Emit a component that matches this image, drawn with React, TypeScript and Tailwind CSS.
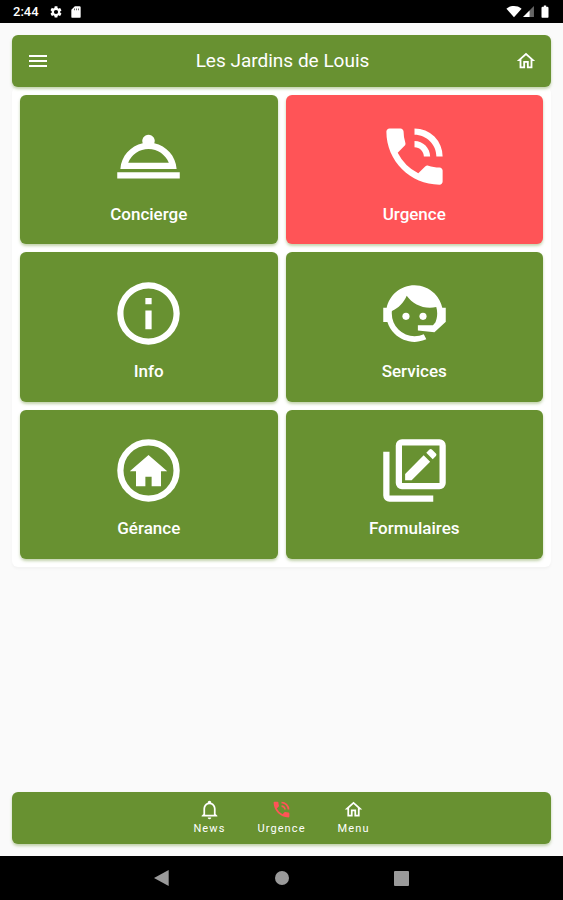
import type { ReactNode } from 'react';

type IconProps = { className?: string };

function Icon({ className, children }: { className?: string; children: ReactNode }) {
  return (
    <svg viewBox="0 0 24 24" fill="currentColor" aria-hidden="true" className={className}>
      {children}
    </svg>
  );
}

const MenuIcon = ({ className }: IconProps) => (
  <Icon className={className}>
    <path d="M3 6h18v2H3zM3 11h18v2H3zM3 16h18v2H3z" />
  </Icon>
);

const HomeIcon = ({ className }: IconProps) => (
  <Icon className={className}>
    <path d="M12 5.69L17 10.19V18H15V12H9V18H7V10.19L12 5.69M12 3L2 12H5V20H11V14H13V20H19V12H22L12 3Z" />
  </Icon>
);

const BellIcon = ({ className }: IconProps) => (
  <Icon className={className}>
    <path d="M10 21H14C14 22.1 13.1 23 12 23S10 22.1 10 21M21 19V20H3V19L5 17V11C5 7.9 7 5.2 10 4.3V4C10 2.9 10.9 2 12 2S14 2.9 14 4V4.3C17 5.2 19 7.9 19 11V17L21 19M17 11C17 8.2 14.8 6 12 6S7 8.2 7 11V18H17V11Z" />
  </Icon>
);

const PhoneIcon = ({ className }: IconProps) => (
  <Icon className={className}>
    <path d="M20 15.5c-1.25 0-2.45-.2-3.57-.57-.35-.11-.74-.03-1.02.24l-2.2 2.2a15.05 15.05 0 0 1-6.59-6.59l2.2-2.21c.28-.26.36-.65.25-1A11.36 11.36 0 0 1 8.5 4c0-.55-.45-1-1-1H4c-.55 0-1 .45-1 1 0 9.39 7.61 17 17 17 .55 0 1-.45 1-1v-3.5c0-.55-.45-1-1-1zM19 12h2a9 9 0 0 0-9-9v2c3.87 0 7 3.13 7 7zm-4 0h2c0-2.76-2.24-5-5-5v2c1.66 0 3 1.34 3 3z" />
  </Icon>
);

const BellServiceIcon = ({ className }: IconProps) => (
  <Icon className={className}>
    <path
      fillRule="evenodd"
      d="M2 17h20v2H2zM13.84 7.79A2.006 2.006 0 0 0 12 5a2.006 2.006 0 0 0-1.84 2.79C6.25 8.6 3.27 11.93 3 16h18c-.27-4.07-3.25-7.4-7.16-8.21zM12 9.58c2.95 0 5.47 1.83 6.5 4.41h-13A7.002 7.002 0 0 1 12 9.58z"
    />
  </Icon>
);

const InfoIcon = ({ className }: IconProps) => (
  <Icon className={className}>
    <path d="M11 9h2V7h-2m1 13c-4.41 0-8-3.59-8-8s3.59-8 8-8 8 3.59 8 8-3.59 8-8 8m0-18A10 10 0 0 0 2 12a10 10 0 0 0 10 10 10 10 0 0 0 10-10A10 10 0 0 0 12 2m-1 15h2v-6h-2v6z" />
  </Icon>
);

const AgentIcon = ({ className }: IconProps) => (
  <Icon className={className}>
    <path d="M18.72,14.76C19.07,13.91 19.26,13 19.26,12C19.26,11.28 19.15,10.59 18.96,9.95C18.31,10.1 17.63,10.18 16.92,10.18C13.86,10.18 11.15,8.67 9.5,6.34C8.61,8.5 6.91,10.26 4.77,11.22C4.73,11.47 4.73,11.74 4.73,12A7.27,7.27 0 0,0 12,19.27C13.05,19.27 14.06,19.04 14.97,18.63C15.54,19.72 15.8,20.26 15.78,20.26C14.14,20.81 12.87,21.08 12,21.08C9.58,21.08 7.27,20.13 5.57,18.42C4.53,17.38 3.76,16.11 3.33,14.73H2V10.18H3.09C3.93,6.04 7.6,2.92 12,2.92C14.4,2.92 16.71,3.87 18.42,5.58C19.69,6.84 20.54,8.45 20.89,10.18H22V14.73H21.94L18.38,18L13.08,17.4V15.73H17.91L18.72,14.76Z" />
    <circle cx="9.27" cy="12.91" r="1.14" />
    <circle cx="14.72" cy="12.91" r="1.14" />
  </Icon>
);

const HomeCircleIcon = ({ className }: IconProps) => (
  <Icon className={className}>
    <circle cx="12" cy="12" r="9" fill="none" stroke="currentColor" strokeWidth="2" />
    <path d="M12 7l-6 5.2h2V17h3v-3h2v3h3v-4.8h2z" />
  </Icon>
);

const FormsIcon = ({ className }: IconProps) => (
  <Icon className={className}>
    <path
      fillRule="evenodd"
      d="M8 2h12a2 2 0 0 1 2 2v12a2 2 0 0 1-2 2H8a2 2 0 0 1-2-2V4a2 2 0 0 1 2-2zM8 4v12h12V4z"
    />
    <path d="M2 6h2v14h14v2H4a2 2 0 0 1-2-2z" />
    <path d="M9 13.08l5.94-5.93 2.06 2.06L11.08 15.1H9zM18.85 7.36l-1.02 1.02-2.06-2.06 1.02-1.02c.21-.22.56-.22.77 0l1.29 1.29c.22.21.22.56 0 .77z" />
  </Icon>
);

const tiles = [
  { label: 'Concierge', icon: BellServiceIcon, color: 'bg-[#689131]' },
  { label: 'Urgence', icon: PhoneIcon, color: 'bg-[#ff5457]' },
  { label: 'Info', icon: InfoIcon, color: 'bg-[#689131]' },
  { label: 'Services', icon: AgentIcon, color: 'bg-[#689131]' },
  { label: 'Gérance', icon: HomeCircleIcon, color: 'bg-[#689131]' },
  { label: 'Formulaires', icon: FormsIcon, color: 'bg-[#689131]' },
];

const tabs = [
  { label: 'News', icon: BellIcon, color: '' },
  { label: 'Urgence', icon: PhoneIcon, color: 'text-[#ff5457]' },
  { label: 'Menu', icon: HomeIcon, color: '' },
];

function StatusBar() {
  return (
    <div className="flex h-[23px] items-center justify-between bg-black pr-[11px] pl-[13px] text-white">
      <div className="flex items-center">
        <span className="w-9 text-[13px] leading-4 font-medium">2:44</span>
        <Icon className="size-[14px]">
          <path d="M19.14 12.94a7 7 0 0 0 0-1.88l2.03-1.58a.5.5 0 0 0 .12-.61l-1.92-3.32a.5.5 0 0 0-.59-.22l-2.39.96a7 7 0 0 0-1.62-.94l-.36-2.54A.5.5 0 0 0 13.92 2h-3.84a.5.5 0 0 0-.48.41l-.36 2.54a7 7 0 0 0-1.62.94l-2.39-.96a.5.5 0 0 0-.59.22L2.72 8.47a.5.5 0 0 0 .12.61l2.03 1.98a7 7 0 0 0 0 1.88l-2.03 1.58a.5.5 0 0 0-.12.61l1.92 3.32c.12.22.37.29.59.22l2.39-.96c.5.38 1.03.7 1.62.94l.36 2.54c.05.24.24.41.48.41h3.84c.24 0 .44-.17.47-.41l.36-2.54a7 7 0 0 0 1.62-.94l2.39.96c.22.08.47 0 .59-.22l1.92-3.32a.5.5 0 0 0-.12-.61zM12 15.6A3.6 3.6 0 1 1 12 8.4a3.6 3.6 0 0 1 0 7.2z" />
        </Icon>
        <Icon className="ml-[6px] size-[14px]">
          <path
            fillRule="evenodd"
            d="M18 2h-8L4 8v12a2 2 0 0 0 2 2h12a2 2 0 0 0 2-2V4a2 2 0 0 0-2-2zM9 6h1v3H9zm3.5 0h1v3h-1zM16 6h1v3h-1z"
          />
        </Icon>
      </div>
      <div className="flex items-center">
        <Icon className="h-[14px] w-4">
          <path d="M12 21L-1 6.500C3 2.500 7.500 1.500 12 1.500S21 2.500 25 6.500z" />
        </Icon>
        <Icon className="size-[13px]">
          <path d="M2 22L22 2v20z" opacity=".4" />
          <path d="M2 22L14 10v12z" />
        </Icon>
        <Icon className="ml-[3px] size-[14px]">
          <path d="M8 3h2V1h4v2h2a2 2 0 0 1 2 2v15a2 2 0 0 1-2 2H8a2 2 0 0 1-2-2V5a2 2 0 0 1 2-2z" />
        </Icon>
      </div>
    </div>
  );
}

export default function App() {
  return (
    <div className="flex min-h-screen flex-col bg-[#fafafa] font-['Roboto',sans-serif] text-white">
      <StatusBar />

      <div className="flex flex-1 flex-col px-3 py-3">
        <header className="z-10 flex h-[52px] items-center justify-between rounded-md bg-[#689131] px-[14px] shadow-[0_2px_3px_rgba(104,145,49,0.4)]">
          <button type="button" aria-label="Ouvrir le menu">
            <MenuIcon className="size-6" />
          </button>
          <h1 className="text-[19px] leading-6">Les Jardins de Louis</h1>
          <button type="button" aria-label="Accueil">
            <HomeIcon className="size-[22px]" />
          </button>
        </header>

        <main className="grid min-h-[480px] grid-cols-2 grid-rows-3 gap-2 rounded-md bg-white p-2 shadow-[0_2px_3px_rgba(0,0,0,0.03)]">
          {tiles.map(({ label, icon: TileIcon, color }) => (
            <button
              key={label}
              type="button"
              className={`flex flex-col items-center justify-center gap-2 rounded-md pt-[5px] shadow-[0_2px_3px_rgba(104,145,49,0.4)] ${color}`}
            >
              <TileIcon className="size-[75px]" />
              <span className="text-[17px] leading-6 font-medium">{label}</span>
            </button>
          ))}
        </main>

        <nav className="mt-auto flex h-[52px] items-center justify-center gap-8 rounded-md bg-[#689131] shadow-[0_2px_3px_rgba(104,145,49,0.4)]">
          {tabs.map(({ label, icon: TabIcon, color }) => (
            <a key={label} href="#" className="flex flex-col items-center gap-px">
              <TabIcon className={`size-[21px] ${color}`} />
              <span className="text-[11px] leading-4 tracking-widest">{label}</span>
            </a>
          ))}
        </nav>
      </div>

      <div className="flex h-11 items-center justify-center bg-black text-[#9a9a9a]">
        <button type="button" aria-label="Retour" className="flex w-[120px] justify-center">
          <Icon className="size-4">
            <path d="M0 12L22 0v24z" />
          </Icon>
        </button>
        <button type="button" aria-label="Écran d’accueil" className="flex w-[120px] justify-center">
          <span className="size-[14px] rounded-full bg-current" />
        </button>
        <button type="button" aria-label="Applications récentes" className="flex w-[120px] justify-center">
          <span className="size-[15px] rounded-[1px] bg-current" />
        </button>
      </div>
    </div>
  );
}
